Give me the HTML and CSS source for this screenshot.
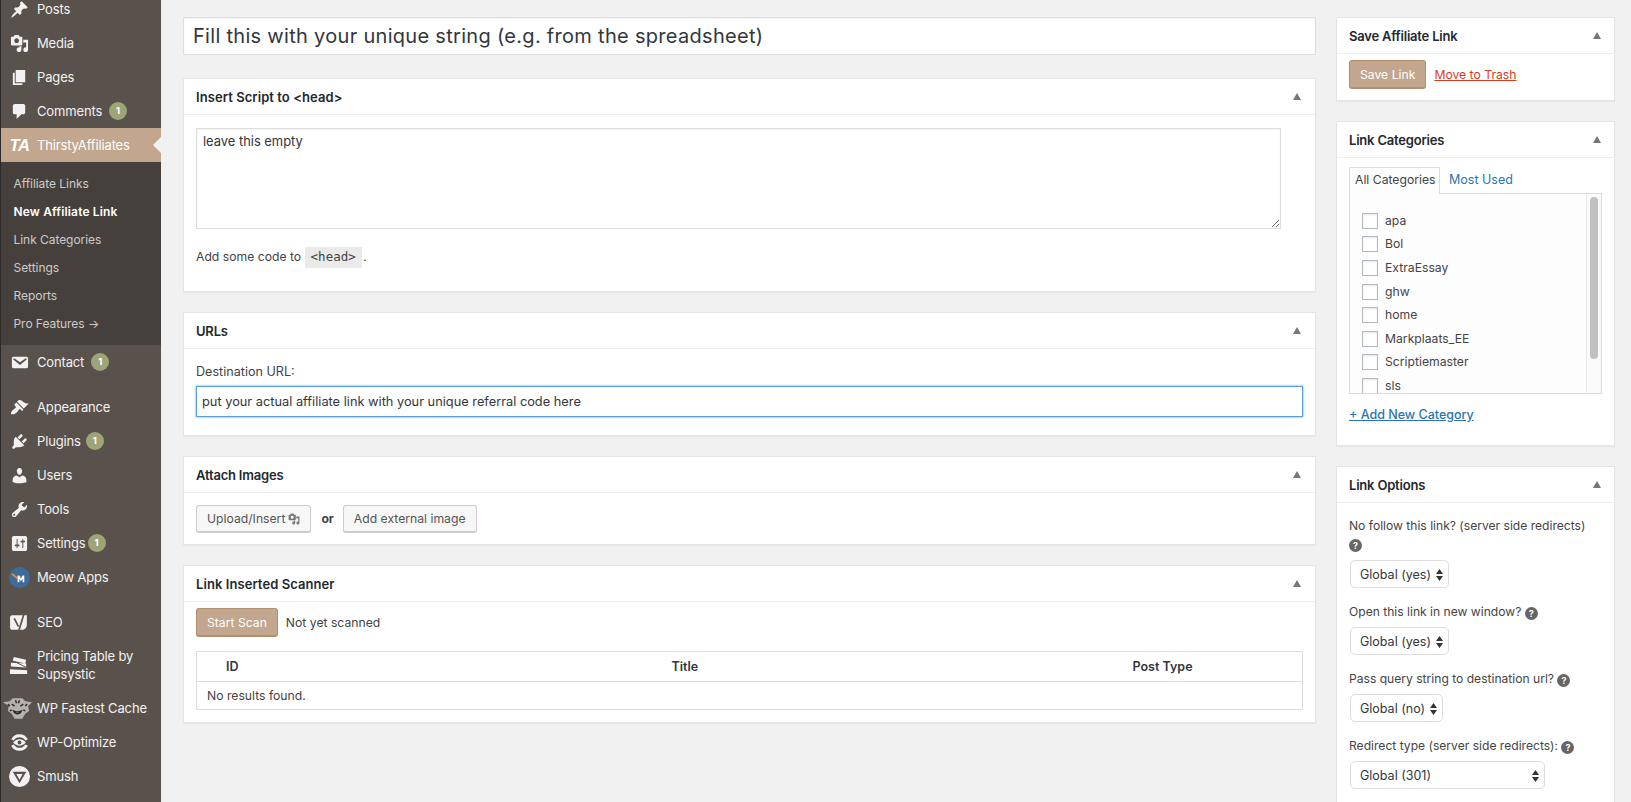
FILE: index.html
```html
<!DOCTYPE html>
<html lang="en">
<head>
<meta charset="utf-8">
<title>Add New Affiliate Link</title>
<link rel="stylesheet" href="styles.css">
</head>
<body>
<div class="page">
<nav class="menu">
  <a class="item"><span class="ic"><svg viewBox="0 0 20 20"><path d="M10.44 3.02l1.82-1.82 6.36 6.35-1.83 1.82c-1.05-.68-2.48-.57-3.41.36l-.75.75c-.92.93-1.04 2.35-.35 3.41l-1.83 1.82-2.41-2.41-2.8 2.79c-.42.42-3.38 2.71-3.8 2.29s1.86-3.39 2.28-3.81l2.79-2.79L4.1 9.36l1.83-1.82c1.05.69 2.48.57 3.4-.36l.75-.75c.93-.92 1.05-2.35.36-3.41z"/></svg></span><span>Posts</span></a>
  <a class="item"><span class="ic"><svg viewBox="0 0 20 20"><path d="M13 11V4c0-.55-.45-1-1-1h-1.67L9 1H5L3.67 3H2c-.55 0-1 .45-1 1v7c0 .55.45 1 1 1h10c.55 0 1-.45 1-1zM7 4.500c1.380 0 2.500 1.120 2.500 2.500S8.380 9.500 7 9.500 4.500 8.380 4.500 7 5.620 4.500 7 4.500zM14 6h5v10.500c0 1.380-1.120 2.500-2.500 2.500S14 17.880 14 16.500s1.120-2.500 2.500-2.500c.17 0 .34.02.5.05V9h-3V6zm-4 8.050V13h2v3.500c0 1.380-1.120 2.500-2.500 2.500S7 17.880 7 16.500 8.120 14 9.500 14c.17 0 .34.02.5.05z"/></svg></span><span>Media</span></a>
  <a class="item"><span class="ic"><svg viewBox="0 0 20 20"><path d="M6 15V2h10v13H6zm-1 1h8v2H3V5h2v11z"/></svg></span><span>Pages</span></a>
  <a class="item"><span class="ic"><svg viewBox="0 0 20 20"><path d="M5 2h9c1.100 0 2 .9 2 2v7c0 1.100-.9 2-2 2h-2l-5 5v-5H5c-1.100 0-2-.9-2-2V4c0-1.100.9-2 2-2z"/></svg></span><span>Comments</span><span class="badge far">1</span></a>
  <a class="item active"><span class="ic ta">TA</span><span>ThirstyAffiliates</span></a>
  <div class="sub">
    <a class="subitem">Affiliate Links</a>
    <a class="subitem current">New Affiliate Link</a>
    <a class="subitem">Link Categories</a>
    <a class="subitem">Settings</a>
    <a class="subitem">Reports</a>
    <a class="subitem">Pro Features →</a>
  </div>
  <a class="item"><span class="ic"><svg viewBox="0 0 20 20"><path d="M3.870 4h13.250C18.370 4 19 4.590 19 5.790v8.420c0 1.190-.63 1.790-1.880 1.790H3.870c-1.250 0-1.880-.6-1.880-1.790V5.790c0-1.200.63-1.790 1.880-1.790zm6.620 8.600l6.740-5.530c.24-.2.43-.66.13-1.070-.29-.41-.82-.42-1.170-.17l-5.700 3.860L4.800 5.830c-.35-.25-.88-.24-1.170.17-.3.41-.11.87.13 1.070z"/></svg></span><span>Contact</span><span class="badge far">1</span></a>
  <div class="sep"></div>
  <a class="item"><span class="ic"><svg viewBox="0 0 20 20"><path d="M14.480 11.060L7.410 3.990l1.500-1.500c.5-.56 2.300-.47 3.510.32 1.210.8 1.430 1.280 2.910 2.100 1.180.64 2.450 1.260 4.450.85zm-.71.71L6.700 4.700 4.930 6.470c-.39.39-.39 1.020 0 1.410l1.060 1.060c.39.39.39 1.030 0 1.420-.6.6-1.430 1.150-2.210 1.760-.35.27-.7.54-1.010.85-.76.76-1.790 2.510-1.790 3.040 0 .53.15 1.130 1.060 1.040.91-.1 1.510-.06 2.040-.06.52 0 2.270-1.030 3.030-1.770.31-.31.58-.66.84-1.010.58-.78 1.090-1.610 1.690-2.210.39-.39 1.030-.39 1.420 0l1.060 1.060c.39.39 1.020.39 1.410 0z"/></svg></span><span>Appearance</span></a>
  <a class="item"><span class="ic"><svg viewBox="0 0 20 20"><path d="M13.110 4.360L9.870 7.600 8 5.730l3.240-3.240c.35-.34 1.050-.2 1.560.32.52.51.66 1.210.31 1.550zm-8 1.770l.91-1.120 9.010 9.010-1.190.84c-.71.71-2.630 1.160-3.820 1.160H6.140L4.900 17.260c-.59.59-1.540.59-2.120 0-.59-.58-.59-1.530 0-2.120l1.240-1.240v-3.880c0-1.130.4-3.190 1.090-3.890zm7.260 3.970l3.240-3.240c.34-.35 1.040-.21 1.550.31.52.51.66 1.210.31 1.550l-3.240 3.250z"/></svg></span><span>Plugins</span><span class="badge">1</span></a>
  <a class="item"><span class="ic"><svg viewBox="0 0 20 20"><path d="M10 9.250c-2.270 0-2.730-3.440-2.730-3.440C7 4.020 7.820 2 9.970 2c2.160 0 2.980 2.020 2.710 3.810 0 0-.41 3.440-2.680 3.440zm0 2.570L12.720 10c2.390 0 4.520 2.330 4.520 4.530v2.490s-3.650 1.130-7.240 1.130c-3.650 0-7.240-1.130-7.240-1.130v-2.490c0-2.250 1.940-4.480 4.470-4.480z"/></svg></span><span>Users</span></a>
  <a class="item"><span class="ic"><svg viewBox="0 0 20 20"><path d="M16.680 9.770c-1.340 1.340-3.300 1.670-4.950.99l-5.410 6.520c-.99.99-2.590.99-3.580 0s-.99-2.590 0-3.570l6.520-5.420c-.68-1.650-.35-3.610.99-4.950 1.280-1.280 3.120-1.620 4.720-1.060l-2.890 2.890 2.820 2.820 2.860-2.870c.53 1.580.18 3.390-1.080 4.670zM3.810 16.210c.4.39 1.040.39 1.430 0 .4-.4.4-1.040 0-1.430-.39-.4-1.030-.4-1.430 0-.39.39-.39 1.030 0 1.430z"/></svg></span><span>Tools</span></a>
  <a class="item"><span class="ic"><svg viewBox="0 0 20 20"><path d="M18 16V4c0-1.100-.9-2-2-2H4c-1.100 0-2 .9-2 2v12c0 1.100.9 2 2 2h12c1.100 0 2-.9 2-2zM8 11h1c.55 0 1 .45 1 1s-.45 1-1 1H8v1.500c0 .28-.22.5-.5.5s-.5-.22-.5-.5V13H6c-.55 0-1-.45-1-1s.45-1 1-1h1V5.500c0-.28.22-.5.5-.5s.5.22.5.5V11zm5-2h-1c-.55 0-1-.45-1-1s.45-1 1-1h1V5.500c0-.28.22-.5.5-.5s.5.22.5.5V7h1c.55 0 1 .45 1 1s-.45 1-1 1h-1v5.500c0 .28-.22.5-.5.5s-.5-.22-.5-.5V9z"/></svg></span><span class="tight">Settings</span><span class="badge">1</span></a>
  <a class="item"><span class="ic"><svg class="wide" viewBox="0 0 22 22"><circle cx="11" cy="11" r="11" fill="#3f6b98"/><path d="M3 7l6 5" stroke="#e08a3c" stroke-width="2" fill="none"/><path d="M9 16V9h1.800l1.700 3 1.700-3H16v7h-1.800v-3.800l-1.700 2.800-1.700-2.800V16z" fill="#fff"/></svg></span><span>Meow Apps</span></a>
  <div class="sep"></div>
  <a class="item"><span class="ic"><svg class="wide" viewBox="0 0 20 20"><path d="M3 3h14v9c0 3-2 5-4 5H3c-1 0-2-1-2-2V5c0-1 1-2 2-2z"/><path d="M5 6l4 8M14.500 1L9 19" stroke="#59524c" stroke-width="1.600" fill="none"/></svg></span><span>SEO</span></a>
  <a class="item"><span class="ic"><svg class="wide" viewBox="0 0 22 20"><path d="M5 1l13 3-1 4L4 5zM2 7l16 1v4L2 11zM1 14l18 1v4H1z"/><path d="M6 6l12 6" stroke="#59524c" stroke-width="1" fill="none"/></svg></span><span>Pricing Table by Supsystic</span></a>
  <a class="item fast"><span class="ic"><svg class="cat" viewBox="0 0 30 22"><path d="M0 5l7-1 3-3 10 0 3 3 7 1-4 4 1 5-4 3-3 5h-8l-3-5-4-3 1-5z" fill="#b5b2ae"/><path d="M9 7l3 2M18 9l3-2M11 14c2 4 6 4 8 0l-3 1h-2zM5 7l2 2M25 7l-2 2M7 14l2-1M23 14l-2-1M13 3l1 3M17 3l-1 3" stroke="#2b2b2b" stroke-width="1.500" fill="none"/></svg></span><span>WP Fastest Cache</span></a>
  <a class="item"><span class="ic"><svg class="wide" viewBox="0 0 20 20"><path d="M2 7a9 9 0 0 1 16 0l-2.500 1a6.500 6.500 0 0 0-11 0zM2 13a9 9 0 0 0 16 0l-2.500-1a6.500 6.500 0 0 1-11 0z"/><path d="M4 10c3.500-4 8.500-4 12 0-3.500 4-8.500 4-12 0z"/><circle cx="10" cy="10" r="1.800" fill="#59524c"/></svg></span><span>WP-Optimize</span></a>
  <a class="item"><span class="ic"><svg class="wide" viewBox="0 0 20 20"><path fill-rule="evenodd" d="M10 0a10 10 0 1 1 0 20a10 10 0 0 1 0-20zM3.500 5.500L10 16.500l6.500-11zM7 7.500h6L10 13z"/></svg></span><span>Smush</span></a>
</nav>

<main class="main">
  <div class="col-main">
    <div class="title-input" role="textbox">Fill this with your unique string (e.g. from the spreadsheet)</div>

    <section class="box box-script">
      <header class="head"><h2 class="wider">Insert Script to &lt;head&gt;</h2><svg class="tri" viewBox="0 0 8 7"><path d="M4 0l4 7H0z"/></svg></header>
      <div class="body">
        <textarea class="code-area">leave this empty</textarea>
        <p class="hint">Add some code to <code>&lt;head&gt;</code> .</p>
      </div>
    </section>

    <section class="box box-urls">
      <header class="head"><h2>URLs</h2><svg class="tri" viewBox="0 0 8 7"><path d="M4 0l4 7H0z"/></svg></header>
      <div class="body">
        <label class="url-label">Destination URL:</label>
        <div class="url-input" role="textbox">put your actual affiliate link with your unique referral code here</div>
      </div>
    </section>

    <section class="box box-images">
      <header class="head"><h2>Attach Images</h2><svg class="tri" viewBox="0 0 8 7"><path d="M4 0l4 7H0z"/></svg></header>
      <div class="body row">
        <a class="btn">Upload/Insert <svg class="btn-ic" viewBox="0 0 20 20"><path d="M13 11V4c0-.55-.45-1-1-1h-1.670L9 1H5L3.670 3H2c-.55 0-1 .45-1 1v7c0 .55.45 1 1 1h10c.55 0 1-.45 1-1zM7 4.500c1.380 0 2.500 1.120 2.500 2.500S8.380 9.500 7 9.500 4.500 8.380 4.500 7 5.620 4.500 7 4.500zM14 6h5v10.500c0 1.380-1.120 2.500-2.500 2.500S14 17.880 14 16.500s1.120-2.500 2.500-2.500c.17 0 .34.02.5.05V9h-3V6zm-4 8.050V13h2v3.500c0 1.380-1.120 2.500-2.500 2.500S7 17.880 7 16.500 8.120 14 9.500 14c.17 0 .34.02.5.05z"/></svg></a>
        <b class="or">or</b>
        <a class="btn">Add external image</a>
      </div>
    </section>

    <section class="box box-scan">
      <header class="head"><h2 class="wider">Link Inserted Scanner</h2><svg class="tri" viewBox="0 0 8 7"><path d="M4 0l4 7H0z"/></svg></header>
      <div class="body">
        <div class="row scan-row"><a class="btn primary scan">Start Scan</a><span class="scan-note">Not yet scanned</span></div>
        <table class="results">
          <thead><tr><th class="c-id">ID</th><th class="c-title">Title</th><th>Post Type</th></tr></thead>
          <tbody><tr><td colspan="3">No results found.</td></tr></tbody>
        </table>
      </div>
    </section>
  </div>

  <aside class="col-side">
    <section class="box box-save">
      <header class="head"><h2>Save Affiliate Link</h2><svg class="tri" viewBox="0 0 8 7"><path d="M4 0l4 7H0z"/></svg></header>
      <div class="body row save-row"><a class="btn primary save">Save Link</a><a class="trash">Move to Trash</a></div>
    </section>

    <section class="box box-cats">
      <header class="head"><h2>Link Categories</h2><svg class="tri" viewBox="0 0 8 7"><path d="M4 0l4 7H0z"/></svg></header>
      <div class="body">
        <div class="tabs"><span class="tab on">All Categories</span><a class="tab">Most Used</a></div>
        <div class="panel">
          <ul class="cats">
            <li><i class="cb"></i>apa</li>
            <li><i class="cb"></i>Bol</li>
            <li><i class="cb"></i>ExtraEssay</li>
            <li><i class="cb"></i>ghw</li>
            <li><i class="cb"></i>home</li>
            <li><i class="cb"></i>Markplaats_EE</li>
            <li><i class="cb"></i>Scriptiemaster</li>
            <li><i class="cb"></i>sls</li>
          </ul>
          <div class="track"><div class="thumb"></div></div>
        </div>
        <a class="add-cat">+ Add New Category</a>
      </div>
    </section>

    <section class="box box-opts">
      <header class="head"><h2>Link Options</h2><svg class="tri" viewBox="0 0 8 7"><path d="M4 0l4 7H0z"/></svg></header>
      <div class="body">
        <p class="opt first">No follow this link? (server side redirects)<br><span class="help">?</span></p>
        <div class="select w99"><span>Global (yes)</span><svg class="updown" viewBox="0 0 7 12"><path d="M3.500 0L7 5H0zM3.500 12L0 7h7z"/></svg></div>
        <p class="opt">Open this link in new window? <span class="help">?</span></p>
        <div class="select w99"><span>Global (yes)</span><svg class="updown" viewBox="0 0 7 12"><path d="M3.500 0L7 5H0zM3.500 12L0 7h7z"/></svg></div>
        <p class="opt">Pass query string to destination url? <span class="help">?</span></p>
        <div class="select w93"><span>Global (no)</span><svg class="updown" viewBox="0 0 7 12"><path d="M3.500 0L7 5H0zM3.500 12L0 7h7z"/></svg></div>
        <p class="opt">Redirect type (server side redirects): <span class="help">?</span></p>
        <div class="select w195"><span>Global (301)</span><svg class="updown" viewBox="0 0 7 12"><path d="M3.500 0L7 5H0zM3.500 12L0 7h7z"/></svg></div>
      </div>
    </section>
  </aside>
</main>
</div>
</body>
</html>
```

FILE: styles.css
```css
* { box-sizing: border-box; }
html, body { margin: 0; height: 802px; overflow: hidden; background: #f1f1f1; }
body { font-family: Inter, "Noto Sans", sans-serif; font-size: 12.2px; line-height: 18px; color: #444; }
p, h2, ul { margin: 0; padding: 0; }
a { text-decoration: none; cursor: pointer; }

.page { display: flex; align-items: flex-start; height: 802px; }

/* admin menu */
.menu { width: 161px; flex: none; height: 830px; margin-top: -8px; background: #59524c; border-left: 1px solid #2c2a28; color: #f3f1f1; font-size: 13px; letter-spacing: -.15px; }
.item { position: relative; display: flex; align-items: center; padding: 8px 4px 8px 0; color: #f3f1f1; line-height: 18px; }
.ic { flex: none; width: 36px; height: 18px; display: flex; align-items: center; justify-content: center; padding-left: 1px; }
.ic svg { width: 19px; height: 19px; fill: #f3f1f1; }
.ic svg.wide { width: 21px; height: 21px; }
.ic svg.cat { width: 29px; height: 22px; margin-left: -4px; }
.ta { font: italic 800 16.5px/18px "Liberation Sans", sans-serif; letter-spacing: -.5px; color: #fff; }
.badge { flex: none; width: 18px; height: 18px; margin-left: 5px; border-radius: 50%; background: #9ea476; color: #fff; font-size: 9.5px; font-weight: 700; line-height: 18px; text-align: center; letter-spacing: 0; }
.badge.far { margin-left: 7px; }
.tight + .badge { margin-left: 2px; }
.active { background: #c2a68d; color: #fff; }
.active::after { content: ""; position: absolute; right: 0; top: 9px; border: 8px solid transparent; border-left: 0; border-right-color: #f1f1f1; }
.sub { background: #46403c; padding: 8px 0 7px; font-size: 12px; letter-spacing: -.05px; }
.subitem { display: block; height: 28px; line-height: 28px; padding-left: 12.5px; color: #cdcbc9; }
.current { color: #fff; font-weight: 600; letter-spacing: .15px; }
.sep { height: 11px; }

/* main area */
.main { flex: 1; display: flex; gap: 20px; padding: 17px 16px 0 22px; align-items: flex-start; }
.col-main { width: 1133px; flex: none; display: flex; flex-direction: column; gap: 20px; }
.col-side { width: 279px; flex: none; display: flex; flex-direction: column; gap: 20px; }
.title-input { height: 38px; margin-bottom: 3px; padding: 0 9px; background: #fff; border: 1px solid #ddd; box-shadow: inset 0 1px 2px rgba(0,0,0,.05); font-size: 20px; line-height: 36px; color: #32373c; letter-spacing: .3px; }

.box { background: #fff; border: 1px solid #e5e5e5; box-shadow: 0 1px 1px rgba(0,0,0,.04); }
.head { height: 36px; display: flex; align-items: center; justify-content: space-between; padding: 0 14px 0 12px; border-bottom: 1px solid #eee; }
.col-side .head { padding-right: 13px; }
h2 { font-size: 13px; font-weight: 600; color: #23282d; letter-spacing: -.2px; line-height: 18px; }
h2.wider { letter-spacing: .07px; }
.tri { width: 8px; height: 7px; fill: #72777c; flex: none; }
.body { padding: 12px; }
.row { display: flex; align-items: center; }

.box-script .body { padding: 13px 12px 0; height: 176px; }
.code-area { display: block; width: 1085px; height: 101px; padding: 4px 6px; border: 1px solid #ddd; font: inherit; font-size: 12.9px; color: #32373c; background: #fff; box-shadow: inset 0 1px 2px rgba(0,0,0,.05); outline: none; }
.hint { margin-top: 17px; height: 21px; line-height: 21px; }
code { display: inline-block; height: 21px; margin: 0 -2px 0 0; padding: 0 6px; background: #eaeaea; font: 12.5px/19px "DejaVu Sans Mono", monospace; }

.box-urls .body { padding: 14px 12px 0; height: 86px; }
.url-label { display: block; font-size: 12.6px; line-height: 18px; margin-bottom: 5px; }
.url-input { height: 31px; font-size: 12.8px; line-height: 30px; padding: 0 5px; border: 1px solid #5b9dd9; box-shadow: 0 0 2px rgba(30,140,190,.8); color: #32373c; }

.btn { display: inline-flex; align-items: center; height: 28px; padding: 1px 10px 0; border: 1px solid #ccc; border-bottom-width: 2px; border-radius: 3px; background: #f7f7f7; color: #555; line-height: 26px; white-space: nowrap; }
.btn-ic { width: 12px; height: 12px; margin-left: 3px; fill: #777; }
.box-images .body { padding: 11px 12px 11px; height: 51px; }
.or { margin: 0 9px 0 10px; color: #444; }
.primary { background: #c2a68d; border-color: #b0906f; color: #fff; }

.box-scan .body { padding: 6px 12px 11px; height: 120px; }
.scan-row { height: 29px; }
.scan { height: 29px; }
.scan-note { margin-left: 8px; }
.results { width: 1107px; margin-top: 14px; border-collapse: collapse; border: 1px solid #ddd; table-layout: fixed; }
.results th { height: 30px; padding: 0 10px; text-align: left; font-size: 12.5px; font-weight: 600; border-bottom: 1px solid #ddd; color: #32373c; }
.results td { height: 28px; padding: 0 10px; }
.c-id { width: 465px; padding-left: 29px !important; }
.c-title { width: 461px; }

.box-save .body { padding: 6px 12px 0; height: 46px; align-items: flex-start; }
.save { height: 29px; }
.trash { margin: 6px 0 0 8px; color: #dc3a1e; text-decoration: underline; }

.box-cats .body { padding: 9px 12px 0; height: 287px; }
.tabs { display: flex; height: 26px; font-size: 12.5px; }
.tab { padding: 0 5px; line-height: 25px; color: #2a75b0; white-space: nowrap; }
.tab.on { width: 91px; margin-bottom: -1px; height: 27px; border: 1px solid #ddd; border-bottom: 0; background: #fdfdfd; color: #444; font-size: 12.2px; line-height: 24px; position: relative; }
.tab + .tab { padding-left: 9px; }
.panel { display: flex; height: 201px; border: 1px solid #ddd; background: #fdfdfd; overflow: hidden; }
.cats { flex: 1; list-style: none; padding: 15px 0 0 12px; }
.cats li { display: flex; align-items: center; height: 23.6px; }
.cb { flex: none; width: 16px; height: 16px; margin-right: 7px; border: 1px solid #b4b9be; background: #fff; box-shadow: inset 0 1px 2px rgba(0,0,0,.1); }
.track { flex: none; width: 15px; border-left: 1px solid #e8e8e8; background: #fafafa; padding: 3px 3px 0; }
.thumb { width: 8px; height: 162px; border-radius: 4px; background: #c1c1c1; }
.add-cat { display: block; margin-top: 12px; font-size: 12.5px; color: #2a75b0; text-decoration: underline; font-weight: 500; }

.box-opts .body { padding: 14px 12px 0; height: 320px; font-size: 12.1px; }
.opt { margin-top: 15px; margin-bottom: 6px; }
.opt.first { margin-top: 0; margin-bottom: 7px; }
.help { display: inline-block; width: 13px; height: 13px; border-radius: 50%; background: #666; color: #fff; font-size: 9px; font-weight: 700; line-height: 13px; text-align: center; vertical-align: -1px; }
.select { display: flex; align-items: center; justify-content: space-between; height: 28px; margin-left: 1px; padding: 1px 5px 0 9px; border: 1px solid #ddd; border-radius: 5px; background: #fff; color: #32373c; font-size: 12.5px; }
.updown { width: 7px; height: 12px; fill: #333; flex: none; }
.w99 { width: 99px; }
.w93 { width: 93px; }
.w195 { width: 195px; }
```
